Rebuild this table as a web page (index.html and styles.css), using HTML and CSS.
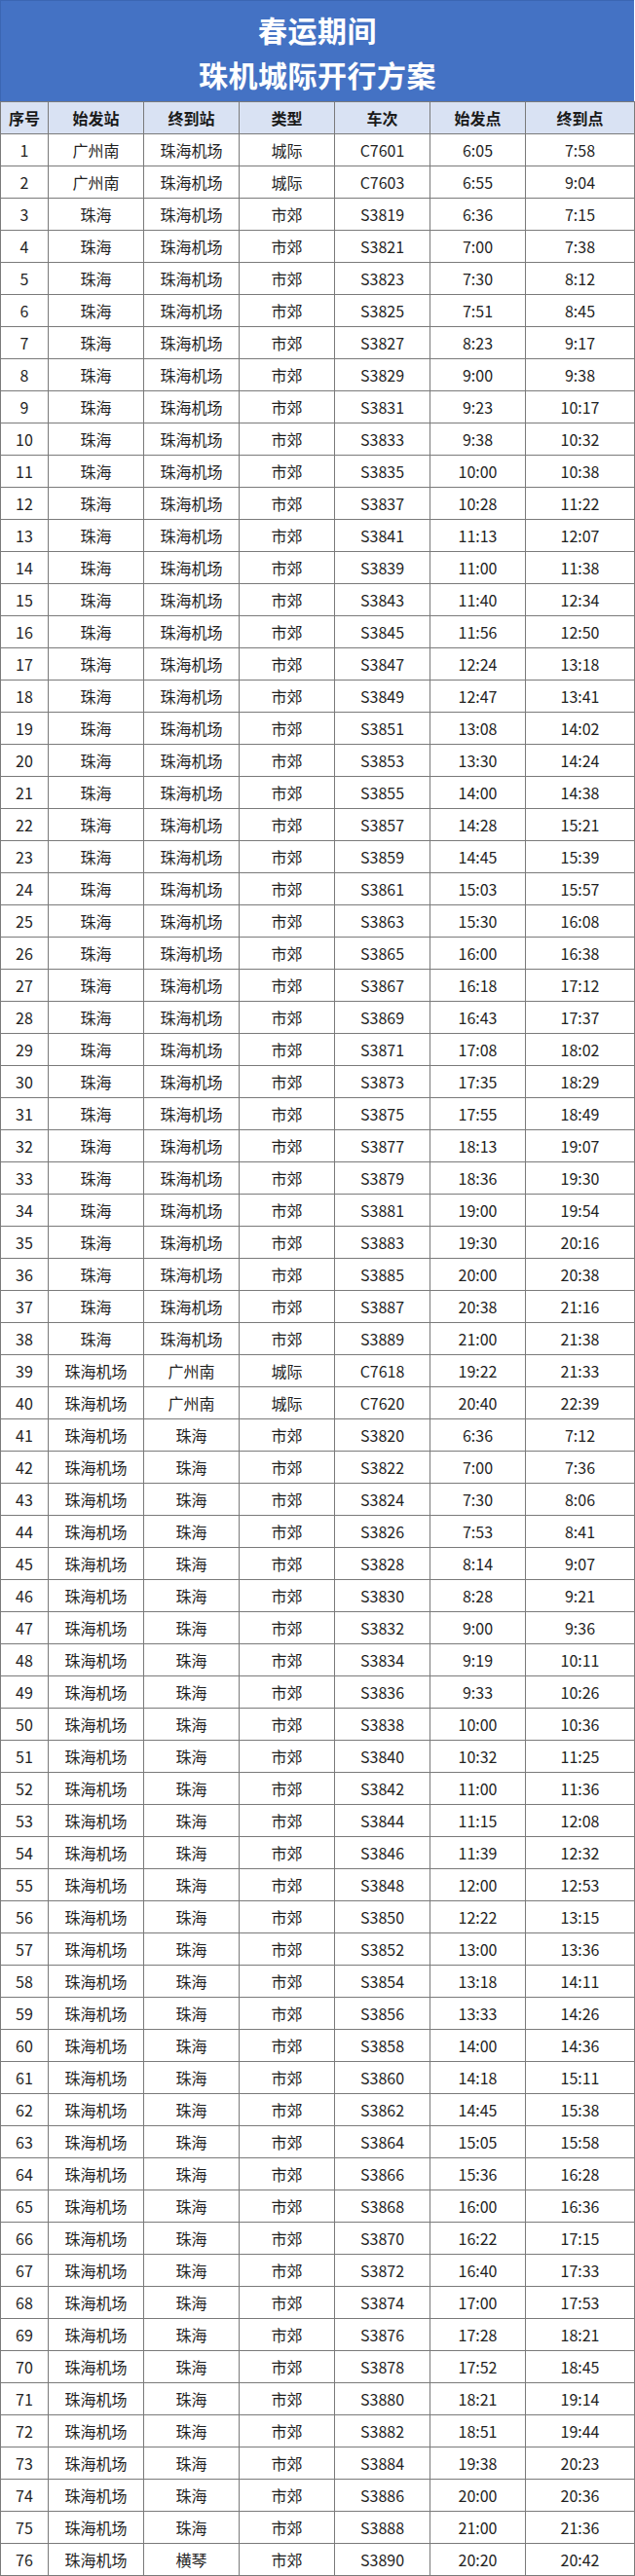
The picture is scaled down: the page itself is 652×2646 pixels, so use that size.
FILE: index.html
```html
<!DOCTYPE html>
<html lang="zh-CN">
<head>
<meta charset="utf-8">
<title>春运期间 珠机城际开行方案</title>
<link rel="stylesheet" href="styles.css">
</head>
<body>
<div class="sheet">
  <div class="title">
    <div class="title-line">春运期间</div>
    <div class="title-line">珠机城际开行方案</div>
  </div>
  <table class="schedule">
    <colgroup>
      <col class="c-no"><col class="c-st"><col class="c-st"><col class="c-st"><col class="c-st"><col class="c-st"><col class="c-last">
    </colgroup>
    <thead>
      <tr><th>序号</th><th>始发站</th><th>终到站</th><th>类型</th><th>车次</th><th>始发点</th><th>终到点</th></tr>
    </thead>
    <tbody>
      <tr><td>1</td><td>广州南</td><td>珠海机场</td><td>城际</td><td>C7601</td><td>6:05</td><td>7:58</td></tr>
      <tr><td>2</td><td>广州南</td><td>珠海机场</td><td>城际</td><td>C7603</td><td>6:55</td><td>9:04</td></tr>
      <tr><td>3</td><td>珠海</td><td>珠海机场</td><td>市郊</td><td>S3819</td><td>6:36</td><td>7:15</td></tr>
      <tr><td>4</td><td>珠海</td><td>珠海机场</td><td>市郊</td><td>S3821</td><td>7:00</td><td>7:38</td></tr>
      <tr><td>5</td><td>珠海</td><td>珠海机场</td><td>市郊</td><td>S3823</td><td>7:30</td><td>8:12</td></tr>
      <tr><td>6</td><td>珠海</td><td>珠海机场</td><td>市郊</td><td>S3825</td><td>7:51</td><td>8:45</td></tr>
      <tr><td>7</td><td>珠海</td><td>珠海机场</td><td>市郊</td><td>S3827</td><td>8:23</td><td>9:17</td></tr>
      <tr><td>8</td><td>珠海</td><td>珠海机场</td><td>市郊</td><td>S3829</td><td>9:00</td><td>9:38</td></tr>
      <tr><td>9</td><td>珠海</td><td>珠海机场</td><td>市郊</td><td>S3831</td><td>9:23</td><td>10:17</td></tr>
      <tr><td>10</td><td>珠海</td><td>珠海机场</td><td>市郊</td><td>S3833</td><td>9:38</td><td>10:32</td></tr>
      <tr><td>11</td><td>珠海</td><td>珠海机场</td><td>市郊</td><td>S3835</td><td>10:00</td><td>10:38</td></tr>
      <tr><td>12</td><td>珠海</td><td>珠海机场</td><td>市郊</td><td>S3837</td><td>10:28</td><td>11:22</td></tr>
      <tr><td>13</td><td>珠海</td><td>珠海机场</td><td>市郊</td><td>S3841</td><td>11:13</td><td>12:07</td></tr>
      <tr><td>14</td><td>珠海</td><td>珠海机场</td><td>市郊</td><td>S3839</td><td>11:00</td><td>11:38</td></tr>
      <tr><td>15</td><td>珠海</td><td>珠海机场</td><td>市郊</td><td>S3843</td><td>11:40</td><td>12:34</td></tr>
      <tr><td>16</td><td>珠海</td><td>珠海机场</td><td>市郊</td><td>S3845</td><td>11:56</td><td>12:50</td></tr>
      <tr><td>17</td><td>珠海</td><td>珠海机场</td><td>市郊</td><td>S3847</td><td>12:24</td><td>13:18</td></tr>
      <tr><td>18</td><td>珠海</td><td>珠海机场</td><td>市郊</td><td>S3849</td><td>12:47</td><td>13:41</td></tr>
      <tr><td>19</td><td>珠海</td><td>珠海机场</td><td>市郊</td><td>S3851</td><td>13:08</td><td>14:02</td></tr>
      <tr><td>20</td><td>珠海</td><td>珠海机场</td><td>市郊</td><td>S3853</td><td>13:30</td><td>14:24</td></tr>
      <tr><td>21</td><td>珠海</td><td>珠海机场</td><td>市郊</td><td>S3855</td><td>14:00</td><td>14:38</td></tr>
      <tr><td>22</td><td>珠海</td><td>珠海机场</td><td>市郊</td><td>S3857</td><td>14:28</td><td>15:21</td></tr>
      <tr><td>23</td><td>珠海</td><td>珠海机场</td><td>市郊</td><td>S3859</td><td>14:45</td><td>15:39</td></tr>
      <tr><td>24</td><td>珠海</td><td>珠海机场</td><td>市郊</td><td>S3861</td><td>15:03</td><td>15:57</td></tr>
      <tr><td>25</td><td>珠海</td><td>珠海机场</td><td>市郊</td><td>S3863</td><td>15:30</td><td>16:08</td></tr>
      <tr><td>26</td><td>珠海</td><td>珠海机场</td><td>市郊</td><td>S3865</td><td>16:00</td><td>16:38</td></tr>
      <tr><td>27</td><td>珠海</td><td>珠海机场</td><td>市郊</td><td>S3867</td><td>16:18</td><td>17:12</td></tr>
      <tr><td>28</td><td>珠海</td><td>珠海机场</td><td>市郊</td><td>S3869</td><td>16:43</td><td>17:37</td></tr>
      <tr><td>29</td><td>珠海</td><td>珠海机场</td><td>市郊</td><td>S3871</td><td>17:08</td><td>18:02</td></tr>
      <tr><td>30</td><td>珠海</td><td>珠海机场</td><td>市郊</td><td>S3873</td><td>17:35</td><td>18:29</td></tr>
      <tr><td>31</td><td>珠海</td><td>珠海机场</td><td>市郊</td><td>S3875</td><td>17:55</td><td>18:49</td></tr>
      <tr><td>32</td><td>珠海</td><td>珠海机场</td><td>市郊</td><td>S3877</td><td>18:13</td><td>19:07</td></tr>
      <tr><td>33</td><td>珠海</td><td>珠海机场</td><td>市郊</td><td>S3879</td><td>18:36</td><td>19:30</td></tr>
      <tr><td>34</td><td>珠海</td><td>珠海机场</td><td>市郊</td><td>S3881</td><td>19:00</td><td>19:54</td></tr>
      <tr><td>35</td><td>珠海</td><td>珠海机场</td><td>市郊</td><td>S3883</td><td>19:30</td><td>20:16</td></tr>
      <tr><td>36</td><td>珠海</td><td>珠海机场</td><td>市郊</td><td>S3885</td><td>20:00</td><td>20:38</td></tr>
      <tr><td>37</td><td>珠海</td><td>珠海机场</td><td>市郊</td><td>S3887</td><td>20:38</td><td>21:16</td></tr>
      <tr><td>38</td><td>珠海</td><td>珠海机场</td><td>市郊</td><td>S3889</td><td>21:00</td><td>21:38</td></tr>
      <tr><td>39</td><td>珠海机场</td><td>广州南</td><td>城际</td><td>C7618</td><td>19:22</td><td>21:33</td></tr>
      <tr><td>40</td><td>珠海机场</td><td>广州南</td><td>城际</td><td>C7620</td><td>20:40</td><td>22:39</td></tr>
      <tr><td>41</td><td>珠海机场</td><td>珠海</td><td>市郊</td><td>S3820</td><td>6:36</td><td>7:12</td></tr>
      <tr><td>42</td><td>珠海机场</td><td>珠海</td><td>市郊</td><td>S3822</td><td>7:00</td><td>7:36</td></tr>
      <tr><td>43</td><td>珠海机场</td><td>珠海</td><td>市郊</td><td>S3824</td><td>7:30</td><td>8:06</td></tr>
      <tr><td>44</td><td>珠海机场</td><td>珠海</td><td>市郊</td><td>S3826</td><td>7:53</td><td>8:41</td></tr>
      <tr><td>45</td><td>珠海机场</td><td>珠海</td><td>市郊</td><td>S3828</td><td>8:14</td><td>9:07</td></tr>
      <tr><td>46</td><td>珠海机场</td><td>珠海</td><td>市郊</td><td>S3830</td><td>8:28</td><td>9:21</td></tr>
      <tr><td>47</td><td>珠海机场</td><td>珠海</td><td>市郊</td><td>S3832</td><td>9:00</td><td>9:36</td></tr>
      <tr><td>48</td><td>珠海机场</td><td>珠海</td><td>市郊</td><td>S3834</td><td>9:19</td><td>10:11</td></tr>
      <tr><td>49</td><td>珠海机场</td><td>珠海</td><td>市郊</td><td>S3836</td><td>9:33</td><td>10:26</td></tr>
      <tr><td>50</td><td>珠海机场</td><td>珠海</td><td>市郊</td><td>S3838</td><td>10:00</td><td>10:36</td></tr>
      <tr><td>51</td><td>珠海机场</td><td>珠海</td><td>市郊</td><td>S3840</td><td>10:32</td><td>11:25</td></tr>
      <tr><td>52</td><td>珠海机场</td><td>珠海</td><td>市郊</td><td>S3842</td><td>11:00</td><td>11:36</td></tr>
      <tr><td>53</td><td>珠海机场</td><td>珠海</td><td>市郊</td><td>S3844</td><td>11:15</td><td>12:08</td></tr>
      <tr><td>54</td><td>珠海机场</td><td>珠海</td><td>市郊</td><td>S3846</td><td>11:39</td><td>12:32</td></tr>
      <tr><td>55</td><td>珠海机场</td><td>珠海</td><td>市郊</td><td>S3848</td><td>12:00</td><td>12:53</td></tr>
      <tr><td>56</td><td>珠海机场</td><td>珠海</td><td>市郊</td><td>S3850</td><td>12:22</td><td>13:15</td></tr>
      <tr><td>57</td><td>珠海机场</td><td>珠海</td><td>市郊</td><td>S3852</td><td>13:00</td><td>13:36</td></tr>
      <tr><td>58</td><td>珠海机场</td><td>珠海</td><td>市郊</td><td>S3854</td><td>13:18</td><td>14:11</td></tr>
      <tr><td>59</td><td>珠海机场</td><td>珠海</td><td>市郊</td><td>S3856</td><td>13:33</td><td>14:26</td></tr>
      <tr><td>60</td><td>珠海机场</td><td>珠海</td><td>市郊</td><td>S3858</td><td>14:00</td><td>14:36</td></tr>
      <tr><td>61</td><td>珠海机场</td><td>珠海</td><td>市郊</td><td>S3860</td><td>14:18</td><td>15:11</td></tr>
      <tr><td>62</td><td>珠海机场</td><td>珠海</td><td>市郊</td><td>S3862</td><td>14:45</td><td>15:38</td></tr>
      <tr><td>63</td><td>珠海机场</td><td>珠海</td><td>市郊</td><td>S3864</td><td>15:05</td><td>15:58</td></tr>
      <tr><td>64</td><td>珠海机场</td><td>珠海</td><td>市郊</td><td>S3866</td><td>15:36</td><td>16:28</td></tr>
      <tr><td>65</td><td>珠海机场</td><td>珠海</td><td>市郊</td><td>S3868</td><td>16:00</td><td>16:36</td></tr>
      <tr><td>66</td><td>珠海机场</td><td>珠海</td><td>市郊</td><td>S3870</td><td>16:22</td><td>17:15</td></tr>
      <tr><td>67</td><td>珠海机场</td><td>珠海</td><td>市郊</td><td>S3872</td><td>16:40</td><td>17:33</td></tr>
      <tr><td>68</td><td>珠海机场</td><td>珠海</td><td>市郊</td><td>S3874</td><td>17:00</td><td>17:53</td></tr>
      <tr><td>69</td><td>珠海机场</td><td>珠海</td><td>市郊</td><td>S3876</td><td>17:28</td><td>18:21</td></tr>
      <tr><td>70</td><td>珠海机场</td><td>珠海</td><td>市郊</td><td>S3878</td><td>17:52</td><td>18:45</td></tr>
      <tr><td>71</td><td>珠海机场</td><td>珠海</td><td>市郊</td><td>S3880</td><td>18:21</td><td>19:14</td></tr>
      <tr><td>72</td><td>珠海机场</td><td>珠海</td><td>市郊</td><td>S3882</td><td>18:51</td><td>19:44</td></tr>
      <tr><td>73</td><td>珠海机场</td><td>珠海</td><td>市郊</td><td>S3884</td><td>19:38</td><td>20:23</td></tr>
      <tr><td>74</td><td>珠海机场</td><td>珠海</td><td>市郊</td><td>S3886</td><td>20:00</td><td>20:36</td></tr>
      <tr><td>75</td><td>珠海机场</td><td>珠海</td><td>市郊</td><td>S3888</td><td>21:00</td><td>21:36</td></tr>
      <tr><td>76</td><td>珠海机场</td><td>横琴</td><td>市郊</td><td>S3890</td><td>20:20</td><td>20:42</td></tr>
    </tbody>
  </table>
</div>
</body>
</html>
```
FILE: styles.css
```css
html, body {
  margin: 0;
  padding: 0;
  background: #ffffff;
}

.sheet {
  width: 651px;
  font-family: "Noto Sans CJK SC", "Noto Sans", sans-serif;
  color: #1a1a1a;
}

.title {
  box-sizing: border-box;
  height: 104px;
  padding-top: 6px;
  background: #4472c4;
  border-left: 1px solid #3b66b3;
  border-top: 1px solid #3b66b3;
  color: #ffffff;
  text-align: center;
}

.title-line {
  font-size: 30px;
  font-weight: 700;
  line-height: 46px;
  letter-spacing: 0.5px;
}

.schedule {
  width: 651px;
  border-collapse: collapse;
  table-layout: fixed;
}

.c-no { width: 49px; }
.c-st { width: 98px; }
.c-last { width: 112px; }

.schedule th,
.schedule td {
  border: 1px solid #7a7a7a;
  padding: 0;
  height: 32px;
  text-align: center;
  vertical-align: middle;
  font-size: 16px;
  line-height: 20px;
  white-space: nowrap;
}

.schedule th {
  background: #d9e2f3;
  font-weight: 700;
  color: #1a1a1a;
}

.schedule td {
  font-weight: 400;
  color: #1f1f1f;
}
```
